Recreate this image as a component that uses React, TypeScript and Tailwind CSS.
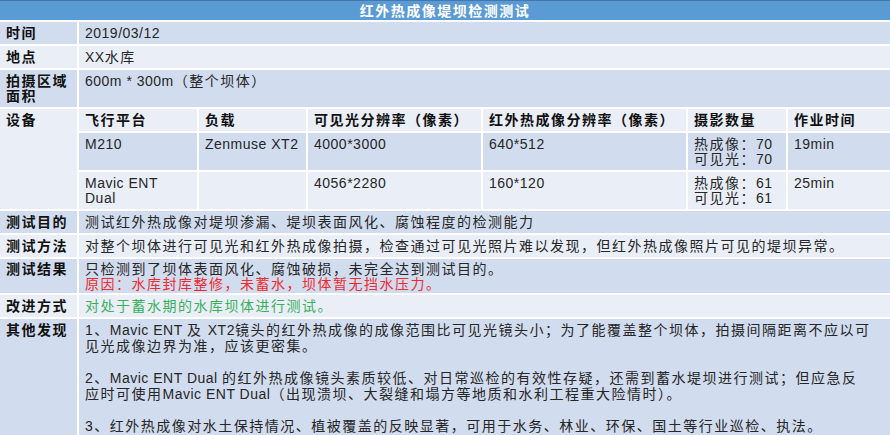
import React from 'react';

const DARK = 'bg-[#d1dcee]';
const LIGHT = 'bg-[#e9eef7]';

interface RowProps {
  label: React.ReactNode;
  tone: 'dark' | 'light';
  tall?: boolean;
  children: React.ReactNode;
}

const Row: React.FC<RowProps> = ({ label, tone, tall, children }) => {
  const bg = tone === 'dark' ? DARK : LIGHT;
  const pad = tall ? 'pt-[4px] pb-[3px] leading-[15px]' : 'py-[3px] leading-[16px]';
  return (
    <>
      <div className={`${bg} ${pad} px-[6px] font-bold text-[#111]`}>{label}</div>
      <div className={`${bg} ${pad} px-[6px]`}>{children}</div>
    </>
  );
};

const Cell: React.FC<{ tone: 'dark' | 'light'; bold?: boolean; latin?: boolean; children?: React.ReactNode }> = ({
  tone,
  bold,
  latin,
  children,
}) => (
  <div
    className={`${tone === 'dark' ? DARK : LIGHT} px-[6px] ${bold ? 'font-bold text-[#111] py-[3px] leading-[16px]' : 'pt-[4px] pb-[3px] leading-[15px]'} ${
      latin ? 'tracking-[0.5px]' : ''
    }`}
  >
    {children}
  </div>
);

// latin runs inside chinese text are narrower
const L: React.FC<{ children: React.ReactNode }> = ({ children }) => (
  <span className="tracking-[0.5px]">{children}</span>
);

export default function App() {
  return (
    <div className="w-[890px] h-[435px] overflow-hidden bg-white font-['Liberation_Sans','Noto_Sans_CJK_SC',sans-serif] text-[14px] tracking-[1.5px] text-[#262626]">
      <div className="h-[20px] bg-[#5b9bd5] border-t border-[#4577a8] flex items-center justify-center text-white font-bold leading-[16px]">
        红外热成像堤坝检测测试
      </div>

      <div className="mt-[2px] grid grid-cols-[77px_1fr] gap-[2px]">
        <Row label="时间" tone="dark">
          <L>2019/03/12</L>
        </Row>
        <Row label="地点" tone="light">
          <L>XX</L>水库
        </Row>
        <Row label="拍摄区域面积" tone="dark" tall>
          <L>600m * 300m</L>（整个坝体）
        </Row>

        {/* 设备 */}
        <div className={`${LIGHT} py-[3px] leading-[16px] px-[6px] font-bold text-[#111]`}>设备</div>
        <div className="grid grid-cols-[118px_107px_173px_203px_98px_102px] gap-[2px]">
          <Cell tone="light" bold>飞行平台</Cell>
          <Cell tone="light" bold>负载</Cell>
          <Cell tone="light" bold>可见光分辨率（像素）</Cell>
          <Cell tone="light" bold>红外热成像分辨率（像素）</Cell>
          <Cell tone="light" bold>摄影数量</Cell>
          <Cell tone="light" bold>作业时间</Cell>

          <Cell tone="dark" latin>M210</Cell>
          <Cell tone="dark" latin>Zenmuse XT2</Cell>
          <Cell tone="dark" latin>4000*3000</Cell>
          <Cell tone="dark" latin>640*512</Cell>
          <Cell tone="dark">
            热成像：<L>70</L>
            <br />
            可见光：<L>70</L>
          </Cell>
          <Cell tone="dark" latin>19min</Cell>

          <Cell tone="light" latin>
            Mavic ENT
            <br />
            Dual
          </Cell>
          <Cell tone="light" />
          <Cell tone="light" latin>4056*2280</Cell>
          <Cell tone="light" latin>160*120</Cell>
          <Cell tone="light">
            热成像：<L>61</L>
            <br />
            可见光：<L>61</L>
          </Cell>
          <Cell tone="light" latin>25min</Cell>
        </div>

        <Row label="测试目的" tone="dark">
          测试红外热成像对堤坝渗漏、堤坝表面风化、腐蚀程度的检测能力
        </Row>
        <Row label="测试方法" tone="light">
          对整个坝体进行可见光和红外热成像拍摄，检查通过可见光照片难以发现，但红外热成像照片可见的堤坝异常。
        </Row>
        <div className={`${DARK} pt-[3px] pb-[1px] leading-[15px] px-[6px] font-bold text-[#111]`}>测试结果</div>
        <div className={`${DARK} pt-[3px] pb-[1px] leading-[15px] px-[6px]`}>
          只检测到了坝体表面风化、腐蚀破损，未完全达到测试目的。
          <br />
          <span className="text-[#ee2a2f]">原因：水库封库整修，未蓄水，坝体暂无挡水压力。</span>
        </div>
        <Row label="改进方式" tone="light">
          <span className="text-[#3bb05c]">对处于蓄水期的水库坝体进行测试。</span>
        </Row>
        <Row label="其他发现" tone="dark">
          <div className="whitespace-nowrap h-[120px]">
            1、<L>Mavic ENT </L>及 <L>XT2</L>镜头的红外热成像的成像范围比可见光镜头小；为了能覆盖整个坝体，拍摄间隔距离不应以可
            <br />
            见光成像边界为准，应该更密集。
            <br />
            <br />
            2、<L>Mavic ENT Dual </L>的红外热成像镜头素质较低、对日常巡检的有效性存疑，还需到蓄水堤坝进行测试；但应急反
            <br />
            应时可使用<L>Mavic ENT Dual</L>（出现溃坝、大裂缝和塌方等地质和水利工程重大险情时）。
            <br />
            <br />
            3、红外热成像对水土保持情况、植被覆盖的反映显著，可用于水务、林业、环保、国土等行业巡检、执法。
          </div>
        </Row>
      </div>
    </div>
  );
}
